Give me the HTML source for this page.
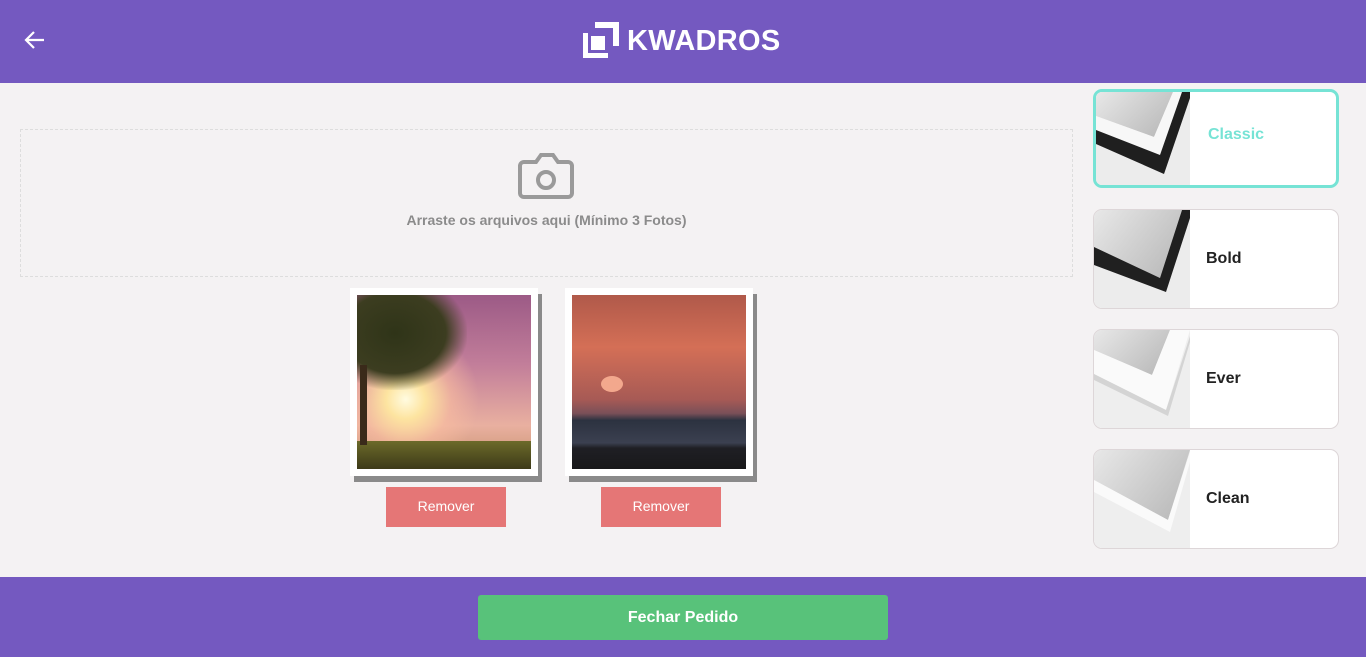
<!DOCTYPE html>
<html><head><meta charset="utf-8"><style>
*{margin:0;padding:0;box-sizing:border-box}
body{width:1366px;height:657px;background:#f4f2f3;font-family:"Liberation Sans",sans-serif;position:relative;overflow:hidden}
.top{position:absolute;left:0;top:0;width:1366px;height:83px;background:#7459c0}
.bot{position:absolute;left:0;top:577px;width:1366px;height:80px;background:#7459c0}
.btn{position:absolute;left:478px;top:595px;width:410px;height:45px;background:#58c27a;border-radius:3px;color:#fff;font-weight:bold;font-size:16px;text-align:center;line-height:45px}
.drop{position:absolute;left:20px;top:129px;width:1053px;height:148px;border:1px dashed #ddd;text-align:center}
.drop p{position:absolute;top:82px;width:100%;color:#8b8b8b;font-weight:bold;font-size:14px}
.ph{position:absolute;width:188px;height:188px;background:#fff;box-shadow:4px 6px 0 #8a8a8a}
.ph .in{position:absolute;left:7px;top:7px;width:174px;height:174px;overflow:hidden}
.rm{position:absolute;width:120px;height:40px;background:#e57676;color:#fff;font-size:14px;text-align:center;line-height:38px}
.card{position:absolute;left:1093px;width:246px;height:100px;background:#fff;border:1px solid #ddd6d8;border-radius:9px;overflow:hidden}
.card svg{position:absolute;left:0;top:0}
.card span{position:absolute;left:112px;top:0;line-height:98px;font-weight:bold;font-size:16px;color:#222}
.sel{border:3px solid #76e3d5;height:99px}
</style></head><body>
<div class="top">
<svg style="position:absolute;left:24px;top:30px" width="22" height="20" viewBox="0 0 22 20"><path d="M20 10H3M10 2L2 10l8 8" stroke="#fff" stroke-width="2.2" fill="none"/></svg>
<svg style="position:absolute;left:583px;top:22px" width="36" height="36" viewBox="0 0 36 36"><path d="M0 11h5v20h20v5H0z" fill="#fff"/><rect x="8" y="14" width="14" height="14" fill="#fff"/><path d="M12 0h24v24h-6V6H12z" fill="#fff"/></svg>
<div style="position:absolute;left:627px;top:23px;color:#fff;font-weight:bold;font-size:29px;letter-spacing:0.3px;line-height:36px">KWADROS</div>
</div>
<div class="drop">
<svg style="position:absolute;left:497px;top:23px" width="56" height="46" viewBox="0 0 56 46"><path d="M6 9h12l5-7h12l5 7h10a4 4 0 0 1 4 4v27a4 4 0 0 1-4 4H6a4 4 0 0 1-4-4V13a4 4 0 0 1 4-4z" fill="none" stroke="#9a9a9a" stroke-width="4"/><circle cx="28" cy="27" r="8" fill="none" stroke="#9a9a9a" stroke-width="4"/></svg>
<p>Arraste os arquivos aqui (Mínimo 3 Fotos)</p>
</div>
<div class="ph" style="left:350px;top:288px"><div class="in" style="background:radial-gradient(circle at 28% 60%,#fffbe0 0,#fde4a0 12%,rgba(250,190,160,.6) 28%,transparent 45%),linear-gradient(180deg,#9c5a86 0,#c27e9a 40%,#e9b0a0 75%,#c48f6a 100%)">
<div style="position:absolute;left:0;bottom:0;width:174px;height:28px;background:linear-gradient(#6c6a2a,#3d3a18)"></div>
<div style="position:absolute;left:-10px;top:0;width:120px;height:95px;background:radial-gradient(ellipse at 40% 40%,#2f3418 0,#3c3d20 50%,transparent 72%)"></div>
<div style="position:absolute;left:3px;top:70px;width:7px;height:80px;background:#3a2a1a"></div>
</div></div>
<div class="rm" style="left:386px;top:487px">Remover</div>
<div class="ph" style="left:565px;top:288px"><div class="in" style="background:linear-gradient(180deg,#b0594a 0,#d46f56 30%,#a75a55 60%,#7a5058 68%,#2c3240 72%,#3b4050 85%,#1f1f24 88%,#18181a 100%)">
<div style="position:absolute;left:29px;top:81px;width:22px;height:16px;border-radius:50%;background:#f3a88d"></div>
</div></div>
<div class="rm" style="left:601px;top:487px">Remover</div>

<svg width="0" height="0" style="position:absolute"><defs><linearGradient id="g" x1="0" y1="0" x2="1" y2="0.6"><stop offset="0" stop-color="#e8e8e8"/><stop offset="1" stop-color="#bdbdbd"/></linearGradient></defs></svg>
<div class="card sel" style="top:89px"><svg width="94" height="95"><rect width="94" height="95" fill="#ececec"/><path d="M0 0H77L58 45 0 24z" fill="url(#g)"/><path d="M0 24 58 45 77 0H86L64 63 0 38z" fill="#f7f7f7"/><path d="M0 38 64 63 86 0H94V6L68 82 0 52z" fill="#1f1f1f"/></svg><span style="color:#76e3d5;line-height:86px">Classic</span></div>
<div class="card" style="top:209px"><svg width="96" height="100"><rect width="96" height="100" fill="#ececec"/><path d="M0 0H88L66 68 0 37z" fill="url(#g)"/><path d="M0 37 66 68 88 0H96V8L72 82 0 55z" fill="#202020"/></svg><span>Bold</span></div>
<div class="card" style="top:329px"><svg width="96" height="100"><rect width="96" height="100" fill="#eee"/><path d="M0 0H76L58 45 0 20z" fill="url(#g)"/><path d="M0 20 58 45 76 0H96L72 80 0 44z" fill="#fafafa"/><path d="M0 44 72 80 96 6V12L74 86 0 50z" fill="#d4d4d4"/></svg><span>Ever</span></div>
<div class="card" style="top:449px"><svg width="96" height="100"><rect width="96" height="100" fill="#eee"/><path d="M0 0H96L74 70 0 30z" fill="url(#g)"/><path d="M0 30 74 70 96 2V12L76 82 0 42z" fill="#fafafa"/></svg><span>Clean</span></div>

<div class="bot"></div>
<div class="btn">Fechar Pedido</div>
</body></html>
